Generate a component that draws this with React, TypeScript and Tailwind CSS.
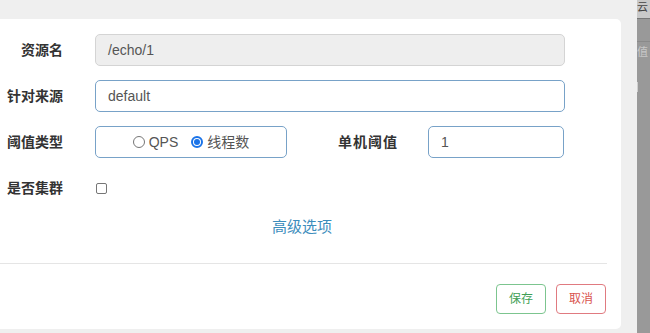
export default function App() {
  return (
    <div className="w-[650px] h-[333px] bg-[#efefef] flex overflow-hidden font-['Liberation_Sans','Noto_Sans_CJK_SC',sans-serif]">
      <div className="w-[621px] shrink-0 mt-[19px] h-[310px] bg-white rounded-r-[5px] flex flex-col">
        <div className="pt-[15px] flex flex-col">
          {/* Row 1 */}
          <div className="h-[32px] flex items-center">
            <div className="w-[63px] text-right font-bold text-[14px] text-[#333]">资源名</div>
            <div className="ml-[32px] w-[470px] h-[32px] flex items-center px-[12px] bg-[#eeeeee] border border-[#d4d4d4] rounded-[5px] text-[14px] text-[#555]">/echo/1</div>
          </div>
          {/* Row 2 */}
          <div className="mt-[14px] h-[32px] flex items-center">
            <div className="w-[63px] text-right font-bold text-[14px] text-[#333]">针对来源</div>
            <div className="ml-[32px] w-[470px] h-[32px] flex items-center px-[12px] bg-white border border-[#78a2c8] rounded-[5px] text-[14px] text-[#555]">default</div>
          </div>
          {/* Row 3 */}
          <div className="mt-[14px] h-[32px] flex items-center">
            <div className="w-[63px] text-right font-bold text-[14px] text-[#333]">阈值类型</div>
            <div className="ml-[32px] w-[192px] h-[32px] flex items-center justify-center bg-white border border-[#78a2c8] rounded-[5px] text-[14px] text-[#555]">
              <span className="w-[12px] h-[12px] rounded-full border border-[#767676] bg-white"></span>
              <span className="ml-[4px]">QPS</span>
              <span className="ml-[13px] w-[12px] h-[12px] rounded-full border-[2px] border-[#1a73e8] bg-white flex items-center justify-center">
                <span className="w-[6px] h-[6px] rounded-full bg-[#1a73e8]"></span>
              </span>
              <span className="ml-[4px]">线程数</span>
            </div>
            <div className="w-[111px] text-right font-bold text-[14px] text-[#333] tracking-[1px]">单机阈值</div>
            <div className="ml-[30px] w-[136px] h-[32px] flex items-center px-[12px] bg-white border border-[#78a2c8] rounded-[5px] text-[14px] text-[#555]">1</div>
          </div>
          {/* Row 4 */}
          <div className="mt-[14px] h-[32px] flex items-center">
            <div className="w-[63px] text-right font-bold text-[14px] text-[#333]">是否集群</div>
            <span className="ml-[33px] w-[11px] h-[11px] rounded-[2px] border border-[#767676] bg-white"></span>
          </div>
          <div className="mt-[13px] h-[20px] leading-[20px] ml-[272px] text-[15px] text-[#3c8dbc]">高级选项</div>
          <div className="mt-[26px] mr-[14px] border-t border-[#e5e5e5]"></div>
          <div className="mt-[20px] flex justify-end gap-[10px] pr-[15px]">
            <div className="w-[50px] h-[30px] flex items-center justify-center border border-[#7cc58f] rounded-[4px] text-[12px] text-[#3f9f57] bg-white">保存</div>
            <div className="w-[50px] h-[30px] flex items-center justify-center border border-[#e07a80] rounded-[4px] text-[12px] text-[#d9534f] bg-white">取消</div>
          </div>
        </div>
      </div>
      <div className="ml-[16px] w-[13px] shrink-0 h-full bg-[#999999] flex flex-col overflow-hidden text-[11px]">
        <div className="h-[19px] bg-[#c9c9c9] border-b border-[#777] text-[#444] leading-[14px]">云</div>
        <div className="h-[23px] border-b border-[#8a8a8a]"></div>
        <div className="mt-[2px] text-[#c8c8c8] leading-[16px]">值</div>
        <div className="mt-[22px] w-[1px] h-[10px] bg-[#cfcfcf]"></div>
      </div>
    </div>
  );
}
